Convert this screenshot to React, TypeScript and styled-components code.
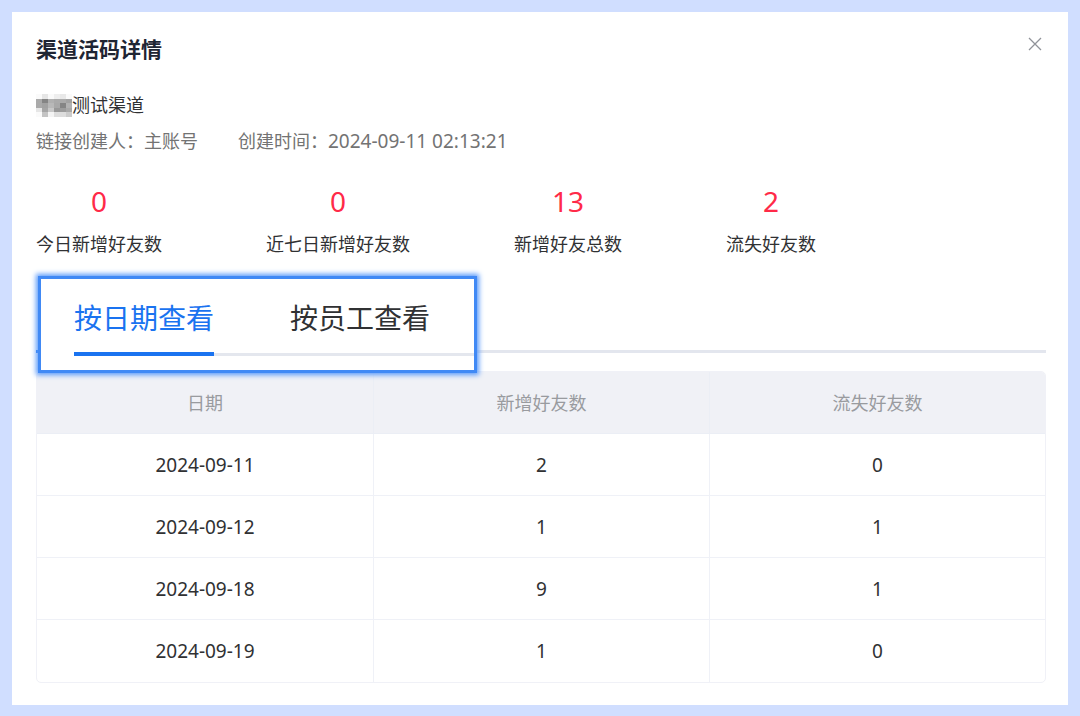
import React, { useState } from 'react';
import styled, { createGlobalStyle } from 'styled-components';

const GlobalStyle = createGlobalStyle`
  *, *::before, *::after { box-sizing: border-box; }
  body {
    margin: 0;
    background: #d0deff;
    color: #303133;
    font-family: "Noto Sans", "Noto Sans CJK SC", sans-serif;
    font-size: 18px;
    line-height: 28px;
  }
`;

const Page = styled.div`
  padding: 12px 12px 11px;
`;

const Dialog = styled.section`
  padding: 23px 22px 22px 24px;
  background: #fff;
`;

const Header = styled.header`
  display: flex;
  justify-content: space-between;
  align-items: flex-start;
`;

const Title = styled.h1`
  margin: 0;
  font-size: 21px;
  line-height: 28px;
  font-weight: 700;
  color: #1f2533;
`;

const CloseButton = styled.button`
  display: flex;
  padding: 2px 4px;
  border: 0;
  background: none;
  color: #909399;
  cursor: pointer;
`;

const ChannelName = styled.div`
  display: flex;
  align-items: center;
  margin-top: 28px;
`;

const Meta = styled.div`
  display: flex;
  gap: 40px;
  margin-top: 8px;
  color: #737373;
`;

const MetaItem = styled.span`
  display: flex;
`;

const Timestamp = styled.time`
  font-size: 19px;
`;

const Stats = styled.dl`
  display: flex;
  gap: 104px;
  margin: 28px 0 0;
`;

const Stat = styled.div`
  display: flex;
  flex-direction: column-reverse;
  gap: 11px;
  text-align: center;
`;

const StatLabel = styled.dt`
  line-height: 28px;
`;

const StatValue = styled.dd`
  margin: 0;
  font-size: 28px;
  line-height: 36px;
  color: #ff2a48;
`;

const TabStrip = styled.div`
  position: relative;
  margin: 18px 0 -2px;
  padding-left: 2px;

  &::before {
    content: "";
    position: absolute;
    left: 0;
    right: 0;
    bottom: 20px;
    height: 3px;
    background: linear-gradient(to right, #1a73f0 90px, #e3e6ee 90px);
  }
`;

const Callout = styled.div`
  position: relative;
  width: fit-content;
  padding: 16px 0 14px 33px;
  border: 3px solid #4089f5;
  background: #fff;
  box-shadow: 0 0 5px 2px #5a9afa;
`;

const TabList = styled.div`
  display: flex;
  gap: 76px;
  padding-right: 44px;
  box-shadow: inset 0 -3px #e4e7ee;
`;

const Tab = styled.button<{ $active: boolean }>`
  padding: 3px 0 14px;
  border: 0;
  border-bottom: 4px solid ${({ $active }) => ($active ? '#1a73f0' : 'transparent')};
  background: none;
  color: ${({ $active }) => ($active ? '#1a73f0' : '#303133')};
  font-family: inherit;
  font-size: 28px;
  line-height: 40px;
  cursor: pointer;
`;

const DataTable = styled.table`
  width: 100%;
  table-layout: fixed;
  border-collapse: separate;
  border-spacing: 0;
  border: 1px solid #f0f1f7;
  border-radius: 5px;
  overflow: hidden;
  text-align: center;
`;

const HeadCell = styled.th`
  height: 62px;
  padding: 0;
  border-bottom: 1px solid #ebeef5;
  background: #f0f1f6;
  color: #999b9f;
  font-weight: 400;

  & + & { border-left: 1px solid #ebeef5; }
`;

const Cell = styled.td`
  height: 62px;
  padding: 0;
  border-bottom: 1px solid #eff1f7;
  font-size: 19px;

  & + & { border-left: 1px solid #eff1f7; }
  tr:last-child > & { border-bottom: 0; }
`;

const mosaic = [
  ['#fafafa', '#e6e6e6', '#fafafa', '#eeeeee', '#e8e8e8', '#fafafa'],
  ['#aaaaaa', '#858585', '#b0b0b0', '#aaaaaa', '#aaaaaa', '#a2a2a2'],
  ['#aaaaaa', '#a2a2a2', '#b8b8b8', '#a8a8a8', '#858585', '#b2b2b2'],
  ['#e6e6e6', '#a6a6a6', '#c8c8c8', '#989898', '#9c9c9c', '#a8a8a8'],
  ['#fafafa', '#c4c4c4', '#f4f4f4', '#dddddd', '#dddddd', '#cccccc'],
];

function Mosaic() {
  return (
    <svg width="36" height="24" viewBox="0 0 36 24" aria-hidden="true" shapeRendering="crispEdges">
      {mosaic.map((row, y) =>
        row.map((fill, x) => (
          <rect key={`${x}-${y}`} x={x * 6} y={1 + y * 4.6} width="6" height="4.6" fill={fill} />
        )),
      )}
    </svg>
  );
}

const stats = [
  { label: '今日新增好友数', value: 0 },
  { label: '近七日新增好友数', value: 0 },
  { label: '新增好友总数', value: 13 },
  { label: '流失好友数', value: 2 },
];

const tabs = ['按日期查看', '按员工查看'];

const rows = [
  { date: '2024-09-11', added: 2, lost: 0 },
  { date: '2024-09-12', added: 1, lost: 1 },
  { date: '2024-09-18', added: 9, lost: 1 },
  { date: '2024-09-19', added: 1, lost: 0 },
];

export default function App() {
  const [active, setActive] = useState(0);
  return (
    <Page>
      <GlobalStyle />
      <Dialog role="dialog" aria-labelledby="dialog-title">
        <Header>
          <Title id="dialog-title">渠道活码详情</Title>
          <CloseButton type="button" aria-label="关闭">
            <svg width="14" height="14" viewBox="0 0 14 14" fill="none" stroke="currentColor" strokeWidth="1.3">
              <path d="M1 1l12 12M13 1L1 13" />
            </svg>
          </CloseButton>
        </Header>
        <ChannelName>
          <Mosaic />
          测试渠道
        </ChannelName>
        <Meta>
          <MetaItem>链接创建人：主账号</MetaItem>
          <MetaItem>
            创建时间：<Timestamp dateTime="2024-09-11T02:13:21">2024-09-11 02:13:21</Timestamp>
          </MetaItem>
        </Meta>
        <Stats>
          {stats.map((s) => (
            <Stat key={s.label}>
              <StatLabel>{s.label}</StatLabel>
              <StatValue>{s.value}</StatValue>
            </Stat>
          ))}
        </Stats>
        <TabStrip>
          <Callout>
            <TabList role="tablist">
              {tabs.map((t, i) => (
                <Tab
                  key={t}
                  type="button"
                  role="tab"
                  aria-selected={i === active}
                  $active={i === active}
                  onClick={() => setActive(i)}
                >
                  {t}
                </Tab>
              ))}
            </TabList>
          </Callout>
        </TabStrip>
        <DataTable>
          <thead>
            <tr>
              <HeadCell scope="col">日期</HeadCell>
              <HeadCell scope="col">新增好友数</HeadCell>
              <HeadCell scope="col">流失好友数</HeadCell>
            </tr>
          </thead>
          <tbody>
            {rows.map((r) => (
              <tr key={r.date}>
                <Cell>{r.date}</Cell>
                <Cell>{r.added}</Cell>
                <Cell>{r.lost}</Cell>
              </tr>
            ))}
          </tbody>
        </DataTable>
      </Dialog>
    </Page>
  );
}
